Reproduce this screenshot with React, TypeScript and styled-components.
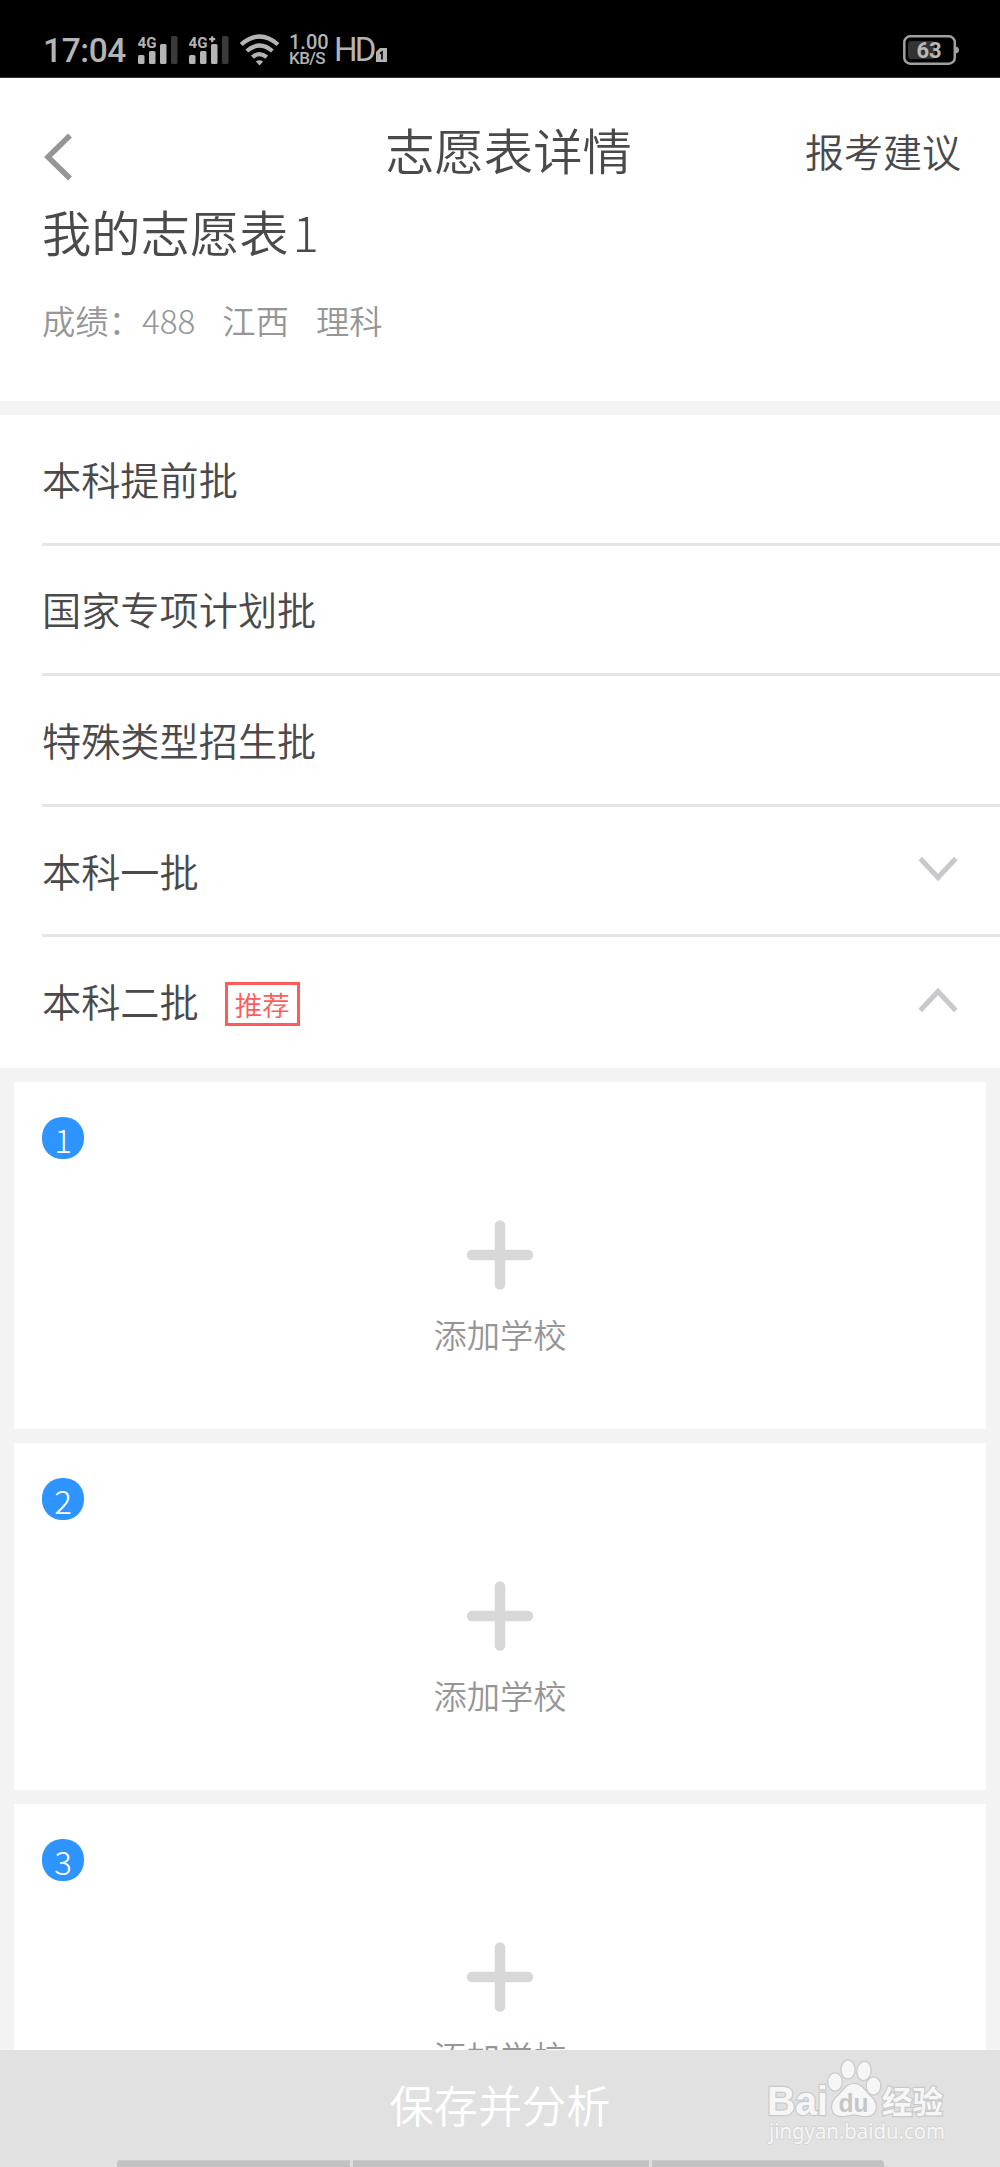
import React from "react";
import styled, { createGlobalStyle } from "styled-components";

const GlobalStyle = createGlobalStyle`
  * { box-sizing: border-box; }
  body {
    margin: 0;
    background: #fff;
    font-family: "Kaiti SC", "KaiTi", "STKaiti", "Noto Sans CJK SC", sans-serif;
    font-weight: 350;
    color: #4a4a4a;
  }
`;

const Page = styled.div`
  width: 1000px;
  height: 2167px;
  display: flex;
  flex-direction: column;
  overflow: hidden;
  background: #fff;
`;

/* ---------- status bar ---------- */

const StatusBar = styled.div`
  height: 78px;
  flex: none;
  display: flex;
  justify-content: space-between;
  align-items: flex-start;
  padding: 34px 41px 0 43px;
  background: #000;
  border-bottom: 1px solid #333;
  font-family: Roboto, sans-serif;
  font-weight: 400;
  color: #b4b4b4;
`;

const StatusLeft = styled.div`
  display: flex;
  align-items: flex-start;
  height: 32px;
`;

const Clock = styled.span`
  width: 95px;
  font-size: 33.5px;
  line-height: 34px;
  font-weight: 500;
  letter-spacing: -0.4px;
`;

const Signal = styled.svg`
  width: 51px;
  height: 32px;
`;

const Wifi = styled.svg`
  width: 49px;
  height: 32px;
`;

const Speed = styled.div`
  display: flex;
  flex-direction: column;
  width: 46px;
  font-weight: 500;
  white-space: nowrap;
`;

const SpeedLine = styled.span<{ $size: number; $spacing?: number }>`
  height: 16px;
  line-height: 16px;
  font-size: ${(p) => p.$size}px;
  letter-spacing: ${(p) => p.$spacing ?? 0}px;
`;

const HdLabel = styled.span`
  width: 42px;
  font-size: 33px;
  line-height: 32px;
  letter-spacing: -2.8px;
  margin-left: -1px;
`;

const Sim = styled.svg`
  width: 11px;
  height: 32px;
`;

const Battery = styled.svg`
  width: 56px;
  height: 32px;
`;

/* ---------- header ---------- */

const NavBar = styled.header`
  height: 120px;
  flex: none;
  display: grid;
  grid-template-columns: 200px 1fr 200px;
  align-items: center;
  padding: 0 39px 0 42px;
`;

const BackIcon = styled.svg`
  width: 34px;
  height: 50px;
  margin-top: 38px;
`;

const Title = styled.h1`
  margin: 22px 0 0 14px;
  text-align: center;
  font-size: 49.3px;
  line-height: 60px;
  font-weight: 350;
  white-space: nowrap;
`;

const Advice = styled.span`
  margin-top: 24px;
  text-align: right;
  font-size: 39px;
  line-height: 50px;
  white-space: nowrap;
`;

const Summary = styled.section`
  height: 203px;
  flex: none;
  padding: 0 42px;
`;

const FormName = styled.h2`
  display: flex;
  gap: 4px;
  margin: 0;
  font-size: 49.3px;
  line-height: 66px;
  font-weight: 350;
`;

const Digits = styled.span`
  font-weight: 300;
`;

const Meta = styled.div`
  display: flex;
  gap: 27px;
  margin-top: 33px;
  font-size: 33.3px;
  line-height: 46px;
  color: #969696;
`;

/* ---------- batches ---------- */

const Scroller = styled.main`
  flex: 1;
  min-height: 0;
  overflow: hidden;
  padding-top: 14px;
  background: #f3f3f3;
`;

const BatchList = styled.div`
  background: #fff;
  padding-left: 42px;
`;

const BatchRow = styled.div<{ $last?: boolean }>`
  height: 130.6px;
  display: flex;
  align-items: center;
  padding-right: 41px;
  border-bottom: 3px solid ${(p) => (p.$last ? "#fff" : "#e6e6e6")};
`;

const BatchName = styled.span`
  font-size: 39.2px;
  line-height: 56px;
  padding-bottom: 2px;
`;

const Tag = styled.span`
  width: 75px;
  height: 44px;
  margin: 5px 0 0 26px;
  border: 3px solid #ff5b5b;
  color: #ff5b5b;
  font-size: 27.5px;
  line-height: 38px;
  text-align: center;
`;

const Chevron = styled.svg`
  width: 42px;
  height: 26px;
  margin: 0 0 3px auto;
`;

const Cards = styled.div`
  display: flex;
  flex-direction: column;
  gap: 14px;
  padding: 14px;
`;

const Card = styled.div`
  height: 347px;
  flex: none;
  display: flex;
  flex-direction: column;
  align-items: center;
  padding: 35px 28px 0;
  background: #fff;
`;

const Badge = styled.span`
  align-self: flex-start;
  width: 42px;
  height: 42px;
  border-radius: 20px;
  background: #2e94ff;
  color: #fff;
  font-size: 33px;
  font-weight: 300;
  line-height: 45px;
  text-align: center;
`;

const Plus = styled.svg`
  width: 68px;
  height: 70px;
  margin-top: 61px;
`;

const AddLabel = styled.span`
  margin-top: 20px;
  font-size: 33.3px;
  line-height: 48px;
  color: #969696;
`;

/* ---------- footer ---------- */

const Footer = styled.footer`
  position: relative;
  height: 117px;
  flex: none;
  display: flex;
  flex-direction: column;
  align-items: center;
  justify-content: space-between;
  background: #e1e1e1;
`;

const SaveLabel = styled.span`
  font-size: 44.2px;
  line-height: 60px;
  padding-top: 24px;
  color: #fff;
`;

const NavHandle = styled.div`
  display: grid;
  grid-template-columns: 233px 296px 232px;
  gap: 3px;
  width: 767px;
  height: 7px;
  background: #dedede;
  border-radius: 4px 4px 0 0;
  overflow: hidden;
`;

const HandlePart = styled.i`
  background: #c2c2c2;
  border-top: 1px solid #cbcbcb;
`;

const Watermark = styled.svg`
  position: absolute;
  left: 760px;
  top: 6px;
  width: 200px;
  height: 94px;
`;

const SignalIcon = ({ plus }: { plus?: boolean }) => (
  <Signal viewBox="0 0 51 32" fill="#b4b4b4">
    <text x="-0.5" y="13.5" fontFamily="Roboto" fontWeight="700" fontSize="15" textLength="19" lengthAdjust="spacingAndGlyphs">4G</text>
    {plus && <path d="M20.2 5.2h6M23.2 2.2v6" stroke="#b4b4b4" strokeWidth="2.2" />}
    <rect x="0" y="21" width="6.5" height="9" rx="1.5" />
    <rect x="11" y="17" width="6.5" height="13" rx="1.5" />
    <rect x="22" y="10" width="6.5" height="20" rx="1.5" />
    <rect x="33" y="2" width="6.5" height="28" rx="1.5" fill="#3a3a3a" />
  </Signal>
);

const ChevronIcon = ({ up }: { up?: boolean }) => (
  <Chevron viewBox="0 0 42 26" fill="none" stroke="#c8c8cd" strokeWidth="5">
    <path d={up ? "M3.2 23.5 21 4.5 38.8 23.5" : "M3.2 2.5 21 21.5 38.8 2.5"} />
  </Chevron>
);

const batches: { name: string; tag?: string; arrow?: "up" | "down" }[] = [
  { name: "本科提前批" },
  { name: "国家专项计划批" },
  { name: "特殊类型招生批" },
  { name: "本科一批", arrow: "down" },
  { name: "本科二批", tag: "推荐", arrow: "up" },
];

export default function App() {
  return (
    <>
      <GlobalStyle />
      <Page>
        <StatusBar>
          <StatusLeft>
            <Clock>17:04</Clock>
            <SignalIcon />
            <SignalIcon plus />
            <Wifi viewBox="0 0 49 32" fill="none" stroke="#b4b4b4" strokeWidth="4.2">
              <path d="M1.2 10.5Q19.5-5.5 38 10.5M6.8 17Q19.5 6 32.4 17M12.4 23.2Q19.5 17 26.8 23.2" />
              <path d="M15.8 27.5Q19.5 24.8 23.2 27.5L19.5 31.5Z" fill="#b4b4b4" stroke="none" />
            </Wifi>
            <Speed>
              <SpeedLine $size={20}>1.00</SpeedLine>
              <SpeedLine $size={17} $spacing={-0.6}>KB/S</SpeedLine>
            </Speed>
            <HdLabel>HD</HdLabel>
            <Sim viewBox="0 0 11 32">
              <path d="M4 14h7v14H0V18Z" fill="#b4b4b4" />
              <path d="M4 19.5 6 18v7.5" fill="none" stroke="#000" strokeWidth="1.6" />
            </Sim>
          </StatusLeft>
          <Battery viewBox="0 0 56 32">
            <rect x="1.3" y="2.3" width="50.5" height="27.4" rx="6" fill="none" stroke="#a0a0a0" strokeWidth="2.5" />
            <path d="M53 12.5q3 .5 3 3.5t-3 3.5Z" fill="#a0a0a0" />
            <rect x="5" y="7" width="27" height="18" rx="3" fill="#333" />
            <text x="26" y="24" textAnchor="middle" fontFamily="Roboto" fontWeight="700" fontSize="22" fill="#b9b9b9">63</text>
          </Battery>
        </StatusBar>

        <NavBar>
          <BackIcon viewBox="0 0 34 50" fill="none" stroke="#959595" strokeWidth="5.5">
            <path d="M28 3.5 6 25 28 46.5" />
          </BackIcon>
          <Title>志愿表详情</Title>
          <Advice>报考建议</Advice>
        </NavBar>
        <Summary>
          <FormName>
            我的志愿表<Digits>1</Digits>
          </FormName>
          <Meta>
            <span>
              成绩：<Digits>488</Digits>
            </span>
            <span>江西</span>
            <span>理科</span>
          </Meta>
        </Summary>

        <Scroller>
          <BatchList>
            {batches.map((b, i) => (
              <BatchRow key={b.name} $last={i === batches.length - 1}>
                <BatchName>{b.name}</BatchName>
                {b.tag && <Tag>{b.tag}</Tag>}
                {b.arrow && <ChevronIcon up={b.arrow === "up"} />}
              </BatchRow>
            ))}
          </BatchList>
          <Cards>
            {[1, 2, 3].map((n) => (
              <Card key={n}>
                <Badge>{n}</Badge>
                <Plus viewBox="0 0 68 70" stroke="#d8d8d8" strokeWidth="10.5" strokeLinecap="round">
                  <path d="M34 5.5v59M6 35h56" />
                </Plus>
                <AddLabel>添加学校</AddLabel>
              </Card>
            ))}
          </Cards>
        </Scroller>

        <Footer>
          <SaveLabel>保存并分析</SaveLabel>
          <NavHandle>
            <HandlePart />
            <HandlePart />
            <HandlePart />
          </NavHandle>
          <Watermark viewBox="0 0 200 94" fill="#f6f6f6" stroke="#cacaca" strokeWidth="2.5" paintOrder="stroke">
            <text x="7" y="59" fontFamily="Liberation Sans" fontWeight="700" fontSize="40" textLength="61" lengthAdjust="spacingAndGlyphs">Bai</text>
            <ellipse cx="75" cy="26" rx="6.7" ry="8.5" />
            <ellipse cx="88" cy="13.5" rx="6.5" ry="9" />
            <ellipse cx="104" cy="15" rx="6.5" ry="9" transform="rotate(8 104 15)" />
            <ellipse cx="113.5" cy="30" rx="6.7" ry="8.5" />
            <path d="M94 28C102 28 105 36 111 41C118 47 118 60 106 60C100 60 98 58.5 94 58.5C90 58.5 88 60 82 60C70 60 70 47 77 41C83 36 86 28 94 28Z" />
            <text x="78.5" y="56" fontFamily="Liberation Sans" fontWeight="700" fontSize="25" fill="#c6c6c6" stroke="none" textLength="30" lengthAdjust="spacingAndGlyphs">du</text>
            <text x="122" y="57" fontFamily="Noto Sans CJK SC" fontWeight="700" fontSize="31" textLength="61" lengthAdjust="spacingAndGlyphs">经验</text>
            <text x="9" y="83" fontFamily="Noto Sans" fontWeight="400" fontSize="21" strokeWidth="1.5" stroke="#d2d2d2" textLength="176" lengthAdjust="spacingAndGlyphs">jingyan.baidu.com</text>
          </Watermark>
        </Footer>
      </Page>
    </>
  );
}
